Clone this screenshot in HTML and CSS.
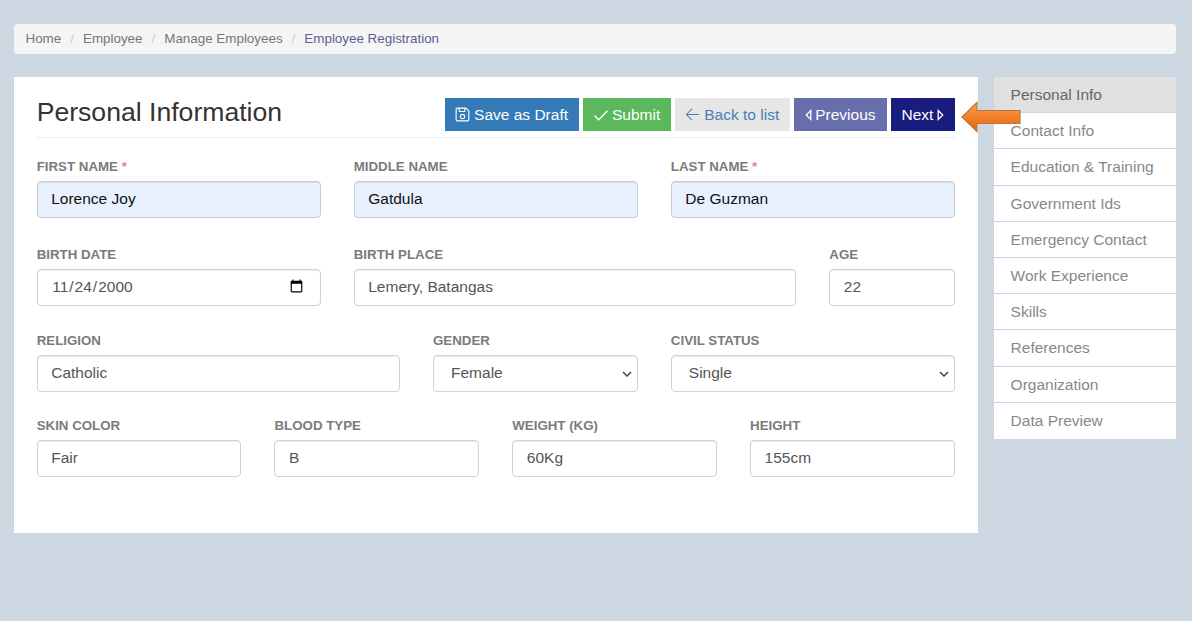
FILE: index.html
```html
<!DOCTYPE html>
<html lang="en">
<head>
<meta charset="utf-8">
<title>Employee Registration</title>
<link rel="stylesheet" href="styles.css">
</head>
<body>
<nav class="crumbs">
  <a>Home</a><span class="sep">/</span><a>Employee</a><span class="sep">/</span><a>Manage Employees</a><span class="sep">/</span><a class="current">Employee Registration</a>
</nav>
<div class="layout">
  <main class="card">
    <header class="card-head">
      <h1>Personal Information</h1>
      <div class="actions">
        <button class="btn btn-blue"><svg class="ico" viewBox="0 0 16 16" width="15" height="15"><path fill="none" stroke="currentColor" stroke-width="1.2" d="M2.5 1.2h9.2l3 3v9.3a1.3 1.3 0 0 1-1.3 1.3H2.5a1.3 1.3 0 0 1-1.3-1.3V2.5a1.3 1.3 0 0 1 1.3-1.3zM4.5 1.2v3.6h6V1.2"/><circle cx="8" cy="10.2" r="2.3" fill="none" stroke="currentColor" stroke-width="1.2"/></svg>Save as Draft</button>
        <button class="btn btn-green"><svg class="ico ico-tight" viewBox="0 0 16 16" width="16" height="16"><path fill="none" stroke="currentColor" stroke-width="1.4" d="M1.5 8.5l4.2 4.2L14.5 3.8"/></svg>Submit</button>
        <button class="btn btn-grey"><svg class="ico" viewBox="0 0 16 16" width="15" height="15"><path fill="none" stroke="currentColor" stroke-width="1.1" d="M15 8H1.5M7.5 2L1.5 8l6 6"/></svg>Back to list</button>
        <button class="btn btn-purple"><svg class="tri" viewBox="0 0 7 12" width="7" height="12"><path fill="none" stroke="currentColor" stroke-width="1.3" d="M5.8 1.5v9L1.2 6z"/></svg>Previous</button>
        <button class="btn btn-navy">Next<svg class="tri tri-after" viewBox="0 0 7 12" width="7" height="12"><path fill="none" stroke="currentColor" stroke-width="1.3" d="M1.2 1.5v9L5.8 6z"/></svg></button>
      </div>
    </header>
    <form class="form">
      <div class="row row-1">
        <label class="field s4"><span class="lbl">First Name <b>*</b></span><input class="ctl filled" value="Lorence Joy"></label>
        <label class="field s4"><span class="lbl">Middle Name</span><input class="ctl filled" value="Gatdula"></label>
        <label class="field s4"><span class="lbl">Last Name <b>*</b></span><input class="ctl filled" value="De Guzman"></label>
      </div>
      <div class="row row-2">
        <label class="field s4"><span class="lbl">Birth Date</span><input class="ctl" type="date" value="2000-11-24"></label>
        <label class="field s6"><span class="lbl">Birth Place</span><input class="ctl" value="Lemery, Batangas"></label>
        <label class="field s2"><span class="lbl">Age</span><input class="ctl" value="22"></label>
      </div>
      <div class="row row-3">
        <label class="field s5"><span class="lbl">Religion</span><input class="ctl" value="Catholic"></label>
        <label class="field s3"><span class="lbl">Gender</span><select class="ctl pick"><option>Female</option></select></label>
        <label class="field s4"><span class="lbl">Civil Status</span><select class="ctl pick"><option>Single</option></select></label>
      </div>
      <div class="row row-4">
        <label class="field s3"><span class="lbl">Skin Color</span><input class="ctl" value="Fair"></label>
        <label class="field s3"><span class="lbl">Blood Type</span><input class="ctl" value="B"></label>
        <label class="field s3"><span class="lbl">Weight (Kg)</span><input class="ctl" value="60Kg"></label>
        <label class="field s3"><span class="lbl">Height</span><input class="ctl" value="155cm"></label>
      </div>
    </form>
  </main>
  <aside class="side">
    <a class="side-item active">Personal Info</a>
    <a class="side-item">Contact Info</a>
    <a class="side-item">Education &amp; Training</a>
    <a class="side-item">Government Ids</a>
    <a class="side-item">Emergency Contact</a>
    <a class="side-item">Work Experience</a>
    <a class="side-item">Skills</a>
    <a class="side-item">References</a>
    <a class="side-item">Organization</a>
    <a class="side-item">Data Preview</a>
  </aside>
</div>
<svg class="arrow" viewBox="0 0 62 32" width="62" height="32"><defs><linearGradient id="ag" x1="0" y1="0" x2="0" y2="1"><stop offset="0" stop-color="#f9a15c"/><stop offset=".5" stop-color="#f58026"/><stop offset="1" stop-color="#d9661a"/></linearGradient></defs><path d="M2 16L17 1.5v8h43v13H17v8z" fill="url(#ag)" stroke="#b8763c" stroke-width="1.2"/></svg>
</body>
</html>
```
FILE: styles.css
```css
* { box-sizing: border-box; }
html, body { height: 100%; }
body {
  margin: 0;
  padding: 24px 16px 0 14px;
  background: #cdd7e2;
  font-family: "Liberation Sans", Arial, sans-serif;
  color: #333;
  position: relative;
  overflow: hidden;
}
.crumbs {
  display: flex;
  align-items: center;
  height: 30px;
  padding: 0 11.5px 1px;
  background: #f5f5f5;
  border-radius: 4px;
  font-size: 13.4px;
  color: #777;
}
.crumbs .sep { margin: 0 9px; color: #ccc; }
.crumbs .current { color: #5a5f9a; }
.layout {
  display: flex;
  align-items: flex-start;
  gap: 16px;
  margin-top: 23px;
}
.card {
  flex: 0 0 963.6px;
  height: 456px;
  background: #fff;
  padding: 0 22.7px;
}
.card-head {
  display: flex;
  align-items: flex-end;
  justify-content: space-between;
  height: 61px;
  padding-bottom: 6px;
  border-bottom: 1px solid #eee;
}
.card-head h1 {
  margin: 0 0 1px;
  font-size: 26.6px;
  font-weight: 400;
  line-height: 36px;
  color: #333;
}
.actions { display: flex; gap: 4px; }
.btn {
  display: inline-flex;
  align-items: center;
  height: 33px;
  padding: 0 10.5px;
  border: 0;
  font: 15.5px "Liberation Sans", Arial, sans-serif;
  color: #fff;
}
.ico { margin-right: 4px; }
.ico-tight { margin-right: 3px; }
.tri { margin-right: 3px; }
.tri-after { margin: 0 0 0 4px; }
.btn-blue { background: #337ab7; }
.btn-green { background: #5cb85c; }
.btn-grey { background: #e6e6e6; color: #4a7eb5; }
.btn-purple { background: #676eab; padding: 0 11.5px; }
.btn-navy { background: #191d7e; }
.row {
  display: grid;
  grid-template-columns: repeat(12, 1fr);
  column-gap: 33px;
}
.row-1 { margin-top: 21px; }
.row-2 { margin-top: 29px; }
.row-3 { margin-top: 27px; }
.row-4 { margin-top: 26px; }
.field { display: block; min-width: 0; }
.s2 { grid-column: span 2; }
.s3 { grid-column: span 3; }
.s4 { grid-column: span 4; }
.s5 { grid-column: span 5; }
.s6 { grid-column: span 6; }
.lbl {
  display: block;
  height: 16px;
  margin-bottom: 6px;
  font-size: 13.3px;
  line-height: 16px;
  font-weight: 700;
  text-transform: uppercase;
  color: #7b7b7b;
}
.lbl b { color: #f0808c; }
.ctl {
  display: block;
  width: 100%;
  height: 37px;
  padding: 0 13.5px 1px;
  border: 1px solid #d2d2d2;
  border-radius: 4px;
  background: #fff;
  font: 15.5px "Liberation Sans", Arial, sans-serif;
  color: #555;
  box-shadow: inset 0 1px 1px rgba(0,0,0,.075);
}
.pick {
  appearance: none;
  padding: 0 13.5px 3px 17px;
  background: #fff url("data:image/svg+xml,%3Csvg xmlns='http://www.w3.org/2000/svg' width='10' height='6'%3E%3Cpath d='M1 1l4 4 4-4' fill='none' stroke='%23444' stroke-width='1.5'/%3E%3C/svg%3E") no-repeat right 5px center;
}
.filled { background: #e8f0fe; color: #111; border-color: #c5ccd6; }
.side { flex: 0 0 182.4px; }
.side-item {
  display: block;
  height: 36.2px;
  padding: 0 17px;
  line-height: 35.4px;
  background: #fff;
  border-bottom: 1.5px solid #cdd7e2;
  font-size: 15.5px;
  color: #888;
}
.side-item:last-child { border-bottom: 0; }
.side-item.active { background: #e0e0e0; color: #666; }
.arrow { position: absolute; left: 960px; top: 101px; }
```
